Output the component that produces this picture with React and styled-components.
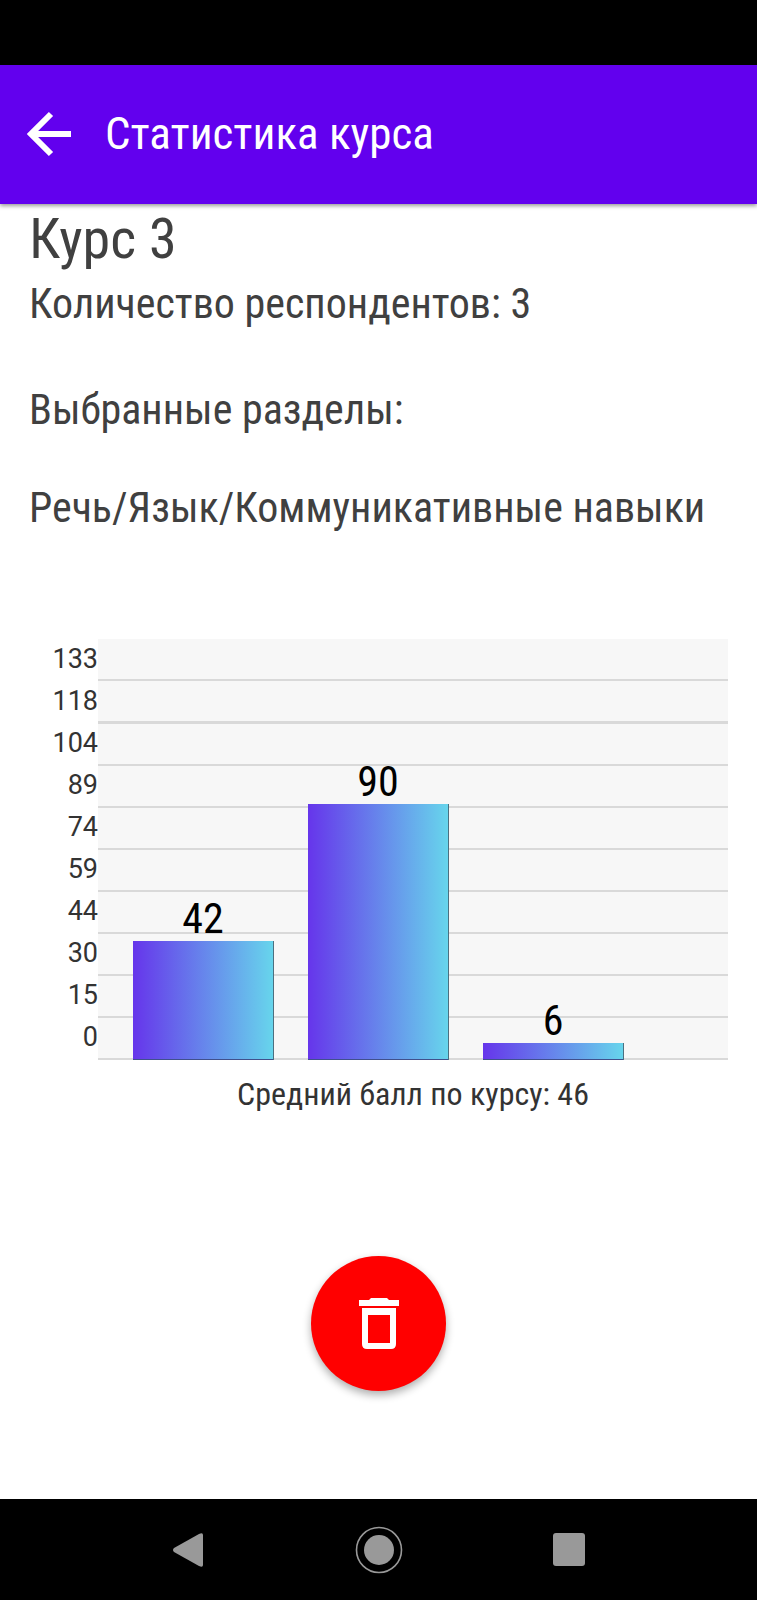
import React from "react";
import styled, { createGlobalStyle } from "styled-components";

const GlobalStyle = createGlobalStyle`
  * { box-sizing: border-box; }
  body {
    margin: 0;
    background: #fff;
    font-family: "Roboto Condensed", Roboto, "Liberation Sans", sans-serif;
    color: #404040;
  }
`;

const Screen = styled.div`
  display: flex;
  flex-direction: column;
  min-height: 100vh;
`;

const StatusBar = styled.div`
  height: 65px;
  background: #000;
`;

const AppBar = styled.header`
  display: flex;
  align-items: center;
  gap: 27px;
  padding: 39px 20px 40px;
  background: #6200ee;
  color: #fff;
  box-shadow: 0 2px 4px rgba(0, 0, 0, 0.4);
`;

const BackButton = styled.button`
  display: flex;
  align-items: center;
  justify-content: center;
  width: 58px;
  height: 60px;
  padding: 0;
  border: 0;
  background: none;
  color: inherit;
`;

const AppTitle = styled.h1`
  margin: 0;
  font-size: 45px;
  font-weight: 400;
  line-height: 60px;
`;

const Content = styled.main`
  flex: 1;
  display: flex;
  flex-direction: column;
  padding: 0 29px;
`;

const CourseName = styled.h2`
  margin: 0;
  font-size: 56px;
  font-weight: 400;
  line-height: 70px;
`;

const Line = styled.p`
  margin: ${(p) => p.$space}px 0 0;
  font-size: 42px;
  line-height: 50px;
`;

const Chart = styled.figure`
  display: grid;
  grid-template-columns: 69px 1fr;
  margin: 106px 0 0;
`;

const Axis = styled.ol`
  margin: 0;
  padding: 0;
  list-style: none;
  color: #333;
  font-family: Roboto, sans-serif;
  font-size: 27px;
  line-height: 40px;
  text-align: right;
`;

const Tick = styled.li`
  height: 42px;
`;

const Plot = styled.div`
  display: grid;
  background: #f7f7f7;
`;

const GridLines = styled.div`
  grid-area: 1 / 1;
`;

const GridLine = styled.div`
  height: ${(p) => (p.$major ? 43 : 42)}px;
  border-bottom: ${(p) => (p.$major ? 3 : 2)}px solid #d9d9d9;
`;

const Bars = styled.div`
  grid-area: 1 / 1;
  display: grid;
  grid-template-columns: repeat(3, 5fr) 3fr;
`;

const BarColumn = styled.div`
  display: flex;
  flex-direction: column;
  justify-content: flex-end;
  padding-left: 20%;
`;

const BarValue = styled.span`
  color: #000;
  font-size: 42px;
  line-height: 44px;
  text-align: center;
`;

const Bar = styled.div`
  background: linear-gradient(90deg, #6635eb, #67d5ec);
  box-shadow: 1px 0 #4c7080;
  border-bottom: 1px solid #40508c;
`;

const Caption = styled.figcaption`
  grid-column: 2;
  padding-top: 14px;
  color: #333;
  font-size: 32px;
  line-height: 40px;
  text-align: center;
`;

const DeleteButton = styled.button`
  display: flex;
  align-items: center;
  justify-content: center;
  align-self: center;
  width: 135px;
  height: 135px;
  margin: 142px 0 40px;
  padding: 0;
  border: 0;
  border-radius: 50%;
  background: #f00;
  box-shadow: 0 4px 8px rgba(0, 0, 0, 0.32);
`;

const NavBar = styled.nav`
  display: flex;
  align-items: center;
  justify-content: center;
  gap: 124px;
  height: 101px;
  background: #000;
`;

const NavButton = styled.button`
  display: flex;
  align-items: center;
  justify-content: center;
  width: 66px;
  height: 60px;
  padding: 0;
  border: 0;
  background: none;
`;

const ticks = [133, 118, 104, 89, 74, 59, 44, 30, 15, 0];
const values = [42, 90, 6];
const SCALE_MAX = 148;

export default function App() {
  return (
    <Screen>
      <GlobalStyle />
      <StatusBar />
      <AppBar>
        <BackButton aria-label="Назад">
          <svg width="46" height="46" viewBox="0 0 46 46" fill="none" stroke="#fff" strokeWidth="6">
            <path d="M45 23H6M25 3L5 23L25 43" />
          </svg>
        </BackButton>
        <AppTitle>Статистика курса</AppTitle>
      </AppBar>
      <Content>
        <CourseName>Курс 3</CourseName>
        <Line $space={5}>Количество респондентов: 3</Line>
        <Line $space={56}>Выбранные разделы:</Line>
        <Line $space={48}>Речь/Язык/Коммуникативные навыки</Line>
        <Chart>
          <Axis>
            {ticks.map((t) => (
              <Tick key={t}>{t}</Tick>
            ))}
          </Axis>
          <Plot>
            <GridLines>
              {ticks.map((t) => (
                <GridLine key={t} $major={t === 118} />
              ))}
            </GridLines>
            <Bars>
              {values.map((v) => (
                <BarColumn key={v}>
                  <BarValue>{v}</BarValue>
                  <Bar style={{ height: `${(v / SCALE_MAX) * 100}%` }} />
                </BarColumn>
              ))}
            </Bars>
          </Plot>
          <Caption>Средний балл по курсу: 46</Caption>
        </Chart>
        <DeleteButton aria-label="Удалить">
          <svg width="42" height="52" viewBox="0 0 42 52" fill="#fff">
            <path d="M13 0H29L31 2H41V8H1V2H11Z" />
            <path fillRule="evenodd" d="M4 10H38V46Q38 51 33 51H9Q4 51 4 46ZM10 17V45H32V17Z" />
          </svg>
        </DeleteButton>
      </Content>
      <NavBar>
        <NavButton aria-label="Назад">
          <svg width="34" height="34" viewBox="0 0 34 34" fill="#999">
            <path d="M2 15L27 1Q31 -1 31 2V32Q31 35 27 33L2 19Q0 17 2 15Z" />
          </svg>
        </NavButton>
        <NavButton aria-label="Домой">
          <svg width="48" height="48" viewBox="0 0 48 48">
            <circle cx="24" cy="24" r="22.5" fill="none" stroke="#999" strokeWidth="1.6" />
            <circle cx="24" cy="24" r="15" fill="#999" />
          </svg>
        </NavButton>
        <NavButton aria-label="Недавние">
          <svg width="32" height="33" viewBox="0 0 32 33">
            <rect width="32" height="33" rx="3" fill="#999" />
          </svg>
        </NavButton>
      </NavBar>
    </Screen>
  );
}
